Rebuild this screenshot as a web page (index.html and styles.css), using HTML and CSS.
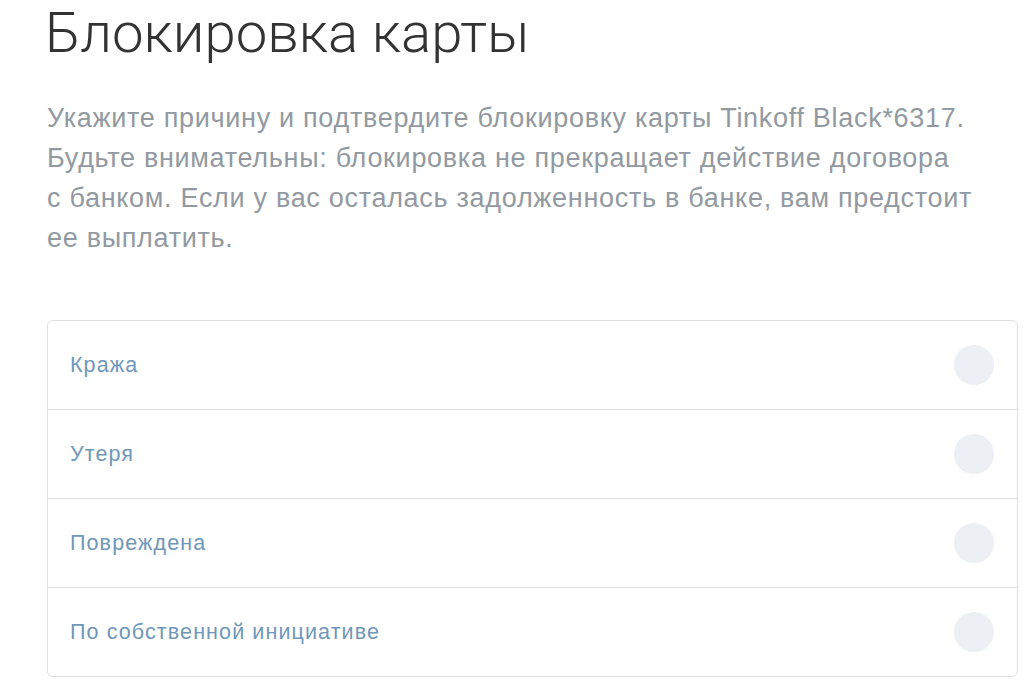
FILE: index.html
```html
<!DOCTYPE html>
<html lang="ru">
<head>
<meta charset="utf-8">
<link rel="stylesheet" href="styles.css">
</head>
<body>
<main class="page">
  <h1 class="title">Блокировка карты</h1>
  <p class="lead">Укажите причину и подтвердите блокировку карты Tinkoff Black*6317.<br>Будьте внимательны: блокировка не прекращает действие договора<br>с банком. Если у вас осталась задолженность в банке, вам предстоит<br>ее выплатить.</p>
  <div class="options">
    <label class="option"><span class="option-text">Кража</span><span class="radio"></span></label>
    <label class="option"><span class="option-text">Утеря</span><span class="radio"></span></label>
    <label class="option"><span class="option-text">Повреждена</span><span class="radio"></span></label>
    <label class="option"><span class="option-text">По собственной инициативе</span><span class="radio"></span></label>
  </div>
</main>
</body>
</html>
```

FILE: styles.css
```css
html, body {
  margin: 0;
  padding: 0;
  background: #ffffff;
}
.page {
  padding: 0 11px 0 47px;
  font-family: "Liberation Sans", Arial, sans-serif;
}
.title {
  margin: 3px 0 0 -2px;
  font-family: Roboto, "Liberation Sans", sans-serif;
  font-weight: 300;
  font-size: 56.3px;
  line-height: 60px;
  color: #333333;
}
.lead {
  margin: 35px 0 0 0;
  font-size: 27px;
  letter-spacing: 0.7px;
  line-height: 40px;
  color: #9299a1;
  white-space: nowrap;
}
.options {
  margin-top: 62px;
  border: 1px solid #dedfe1;
  border-radius: 6px;
  display: flex;
  flex-direction: column;
}
.option {
  height: 88px;
  display: flex;
  align-items: center;
  justify-content: space-between;
  padding: 0 23px 0 22px;
  border-top: 1px solid #dedfe1;
}
.option:first-child {
  border-top: none;
}
.option-text {
  font-size: 21.5px;
  letter-spacing: 1.1px;
  color: #7097b8;
}
.radio {
  width: 40px;
  height: 40px;
  border-radius: 50%;
  background: #eceff3;
}
```
